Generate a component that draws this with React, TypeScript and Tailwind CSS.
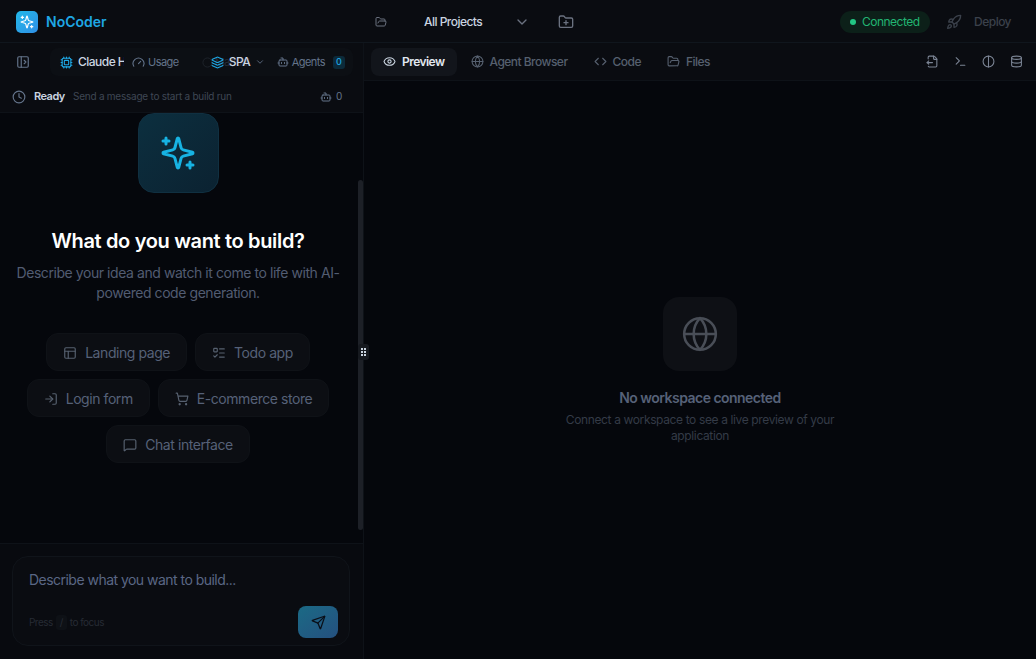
import {
  Bot,
  ChevronDown,
  Circle,
  Clock,
  Code,
  Cpu,
  Database,
  Eye,
  FileOutput,
  FolderOpen,
  FolderPlus,
  Gauge,
  Globe,
  Layers,
  ListTodo,
  LogIn,
  MessageSquare,
  PanelLeftOpen,
  PanelsTopLeft,
  Rocket,
  Send,
  ShoppingCart,
  Terminal,
} from 'lucide-react';

function Spark({ className }: { className: string }) {
  return (
    <svg viewBox="0 0 24 24" fill="none" stroke="currentColor" strokeWidth="2" strokeLinecap="round" strokeLinejoin="round" className={className}>
      <path d="M9.937 15.5A2 2 0 0 0 8.5 14.063l-6.135-1.582a.5.5 0 0 1 0-.962L8.5 9.936A2 2 0 0 0 9.937 8.5l1.582-6.135a.5.5 0 0 1 .963 0L14.063 8.5A2 2 0 0 0 15.5 9.937l6.135 1.581a.5.5 0 0 1 0 .964L15.5 14.063a2 2 0 0 0-1.437 1.437l-1.582 6.135a.5.5 0 0 1-.963 0z" />
      <path d="M4 2v4M2 4h4M20 18v4M18 20h4" />
    </svg>
  );
}

function HalfCircle({ className }: { className: string }) {
  return (
    <svg viewBox="0 0 24 24" fill="none" stroke="currentColor" strokeWidth="2" strokeLinecap="round" className={className}>
      <circle cx="12" cy="12" r="10" />
      <path d="M12 2v20" />
    </svg>
  );
}

const chips = [
  { label: 'Landing page', Icon: PanelsTopLeft },
  { label: 'Todo app', Icon: ListTodo },
  { label: 'Login form', Icon: LogIn },
  { label: 'E-commerce store', Icon: ShoppingCart },
  { label: 'Chat interface', Icon: MessageSquare },
];

const tabs = [
  { label: 'Agent Browser', Icon: Globe },
  { label: 'Code', Icon: Code },
  { label: 'Files', Icon: FolderOpen },
];

export default function App() {
  return (
    <div className="relative flex h-[659px] w-[1036px] flex-col overflow-hidden bg-[#05070c] font-['Inter',sans-serif] tracking-[-0.033em] text-[#64748b]">
      <header className="flex h-[43px] shrink-0 items-center border-b border-[#10161d] bg-[#0a0c11] pt-[1px]">
        <div className="flex w-[363px] shrink-0 items-center gap-2 pl-4">
          <div className="flex size-[22px] items-center justify-center rounded-[5px] bg-gradient-to-br from-[#22b8e8] to-[#2f8fe6]">
            <Spark className="size-[14px] text-white" />
          </div>
          <span className="text-sm font-semibold tracking-normal text-[#1ea7e4]">NoCoder</span>
        </div>
        <FolderOpen className="ml-[12px] size-[12px] text-[#6b7280]" />
        <span className="ml-[37px] w-[90px] text-xs font-medium text-[#cbd5e1]">All Projects</span>
        <ChevronDown className="size-4 text-[#6b7280]" />
        <FolderPlus className="ml-[28px] size-4 text-[#6b7280]" />
        <div className="ml-auto flex h-[22px] w-[90px] items-center gap-[6px] rounded-full bg-[#0c2019] pl-[10px] text-xs text-[#22b573]">
          <span className="size-[6px] rounded-full bg-[#22c583]" />
          Connected
        </div>
        <Rocket className="ml-[16px] size-4 text-[#3b414b]" />
        <span className="ml-[12px] mr-[25px] text-xs font-medium text-[#3b414b]">Deploy</span>
      </header>

      <div className="flex min-h-0 flex-1">
        <aside className="flex w-[364px] shrink-0 flex-col border-r border-[#0e1218] bg-[#05070c]">
          <div className="flex h-[38px] shrink-0 items-center bg-[#0a0c11] pl-4">
            <PanelLeftOpen className="size-[14px] text-[#64748b]" />
            <div className="ml-[20px] flex h-[28px] w-[303px] items-center rounded-lg bg-[#0c0f14]">
              <div className="flex w-[74px] items-center gap-[5px] overflow-hidden pl-[10px]">
                <Cpu className="size-[13px] shrink-0 text-[#1ea7e4]" />
                <span className="whitespace-nowrap text-xs font-medium text-[#cbd5e1]">Claude Haiku</span>
              </div>
              <div className="ml-[8px] flex items-center gap-[3px] text-[11px]">
                <Gauge className="size-[13px]" />
                Usage
              </div>
              <div className="relative ml-[32px] flex items-center">
                <Circle className="absolute -left-[9px] size-[11px] text-[#20252d]" />
                <span className="absolute left-[4px] text-[11px] text-[#262b34]">Manual</span>
                <Layers className="relative size-[13px] text-[#1ea7e4]" />
                <span className="relative ml-[5px] w-[26px] text-xs font-medium text-[#cbd5e1]">SPA</span>
                <ChevronDown className="size-[10px]" />
                <Bot className="ml-[12px] size-[12px]" />
                <span className="ml-[3px] w-[36px] text-[11px]">Agents</span>
                <span className="ml-[5px] flex h-[13px] w-[12px] items-center justify-center rounded-[3px] bg-[#0c2a3a] text-[9px] font-medium text-[#1ea7e4]">0</span>
              </div>
            </div>
          </div>

          <div className="flex h-[32px] shrink-0 items-center border-b border-[#0e1218] bg-[#0a0c11] pl-3">
            <Clock className="size-[14px]" />
            <span className="ml-[8px] w-[31px] text-[11px] font-semibold text-[#cbd5e1]">Ready</span>
            <span className="ml-[8px] w-[247px] text-[10px] tracking-[-0.024em] text-[#3f4754]">Send a message to start a build run</span>
            <Bot className="size-[12px]" />
            <span className="ml-[4px] text-[10px]">0</span>
          </div>

          <div className="relative min-h-0 flex-1 overflow-hidden">
            <div className="flex flex-col items-center pr-[7px]">
              <div className="flex h-[80px] w-[81px] items-center justify-center rounded-2xl border border-[#103041] bg-gradient-to-br from-[#0c2f3f] to-[#0b2231]">
                <Spark className="size-[36px] text-[#17b3e3]" />
              </div>
              <h1 className="mt-[34px] text-xl font-semibold leading-[28px] tracking-[-0.017em] text-white">What do you want to build?</h1>
              <p className="mt-[8px] w-[330px] text-center text-sm leading-[20px] tracking-[-0.031em] text-[#525c72]">
                Describe your idea and watch it come to life with AI-powered code generation.
              </p>
              <div className="mt-[30px] flex w-[322px] flex-wrap justify-center gap-2">
                {chips.map(({ label, Icon }) => (
                  <div key={label} className="flex h-[38px] items-center gap-[8px] rounded-xl border border-[#0f1217] bg-[#0c0e13] px-4 pt-px text-sm tracking-[-0.031em] text-[#566178]">
                    <Icon className="size-[14px] text-[#56606f]" />
                    {label}
                  </div>
                ))}
              </div>
            </div>
            <div className="absolute bottom-[13px] right-0 h-[350px] w-[5px] rounded-full bg-[#1d2027]" />
          </div>

          <div className="h-[116px] shrink-0 border-t border-[#0e1218] bg-[#080a0f] px-3 pt-3">
            <div className="flex h-[90px] w-[338px] flex-col rounded-2xl border border-[#10141a] bg-[#0a0c11] pl-4 pr-[11px] pb-[7px] pt-[13px]">
              <span className="text-sm leading-[20px] text-[#5a6785]">Describe what you want to build...</span>
              <div className="mt-auto flex items-end justify-between">
                <span className="mb-[8px] flex items-center text-[10px] text-[#262b34]">
                  Press
                  <span className="mx-[3px] rounded-[3px] bg-[#0e1116] px-[4px]">/</span>
                  to focus
                </span>
                <div className="flex h-[32px] w-[40px] items-center justify-center rounded-lg bg-gradient-to-br from-[#1a6a85] to-[#24507f]">
                  <Send className="size-[15px] text-[#0a0f18]" />
                </div>
              </div>
            </div>
          </div>
        </aside>

        <main className="flex min-w-0 flex-1 flex-col">
          <div className="flex h-[38px] shrink-0 items-center border-b border-[#0e1218] bg-[#0a0c11] pl-[7px] pr-[13px]">
            <div className="flex h-[28px] items-center gap-[6px] rounded-lg bg-[#12151b] px-[12px] text-xs font-semibold tracking-[-0.045em] text-[#e2e8f0]">
              <Eye className="size-[13px] text-[#cbd5e1]" />
              Preview
            </div>
            <div className="ml-px flex items-center">
              {tabs.map(({ label, Icon }) => (
                <div key={label} className="flex h-[28px] items-center gap-[6px] px-[13px] text-xs font-medium text-[#56606f]">
                  <Icon className="size-[13px]" />
                  {label}
                </div>
              ))}
            </div>
            <div className="ml-auto flex items-center gap-[15px] text-[#7b8494]">
              <FileOutput className="size-[13px]" />
              <Terminal className="size-[13px]" />
              <HalfCircle className="size-[13px]" />
              <Database className="size-[13px]" />
            </div>
          </div>
          <div className="flex flex-1 flex-col items-center pt-[216px]">
            <div className="flex size-[74px] items-center justify-center rounded-2xl bg-[#0e1015]">
              <Globe className="size-[38px] text-[#494e57]" strokeWidth={1.6} />
            </div>
            <h2 className="mt-[17px] text-sm font-semibold leading-[20px] text-[#566178]">No workspace connected</h2>
            <p className="mt-[4px] w-[280px] text-center text-xs leading-[16px] tracking-[-0.031em] text-[#343b47]">
              Connect a workspace to see a live preview of your application
            </p>
          </div>
        </main>
      </div>

      <div className="absolute left-[358px] top-[344px] flex h-[16px] w-[11px] items-center justify-center rounded-[3px] bg-[#16191f]">
        <span className="grid grid-cols-2 gap-[1px]">
          {[0, 1, 2, 3, 4, 5].map((n) => (
            <span key={n} className="size-[2px] bg-[#cbd5e1]" />
          ))}
        </span>
      </div>
    </div>
  );
}
